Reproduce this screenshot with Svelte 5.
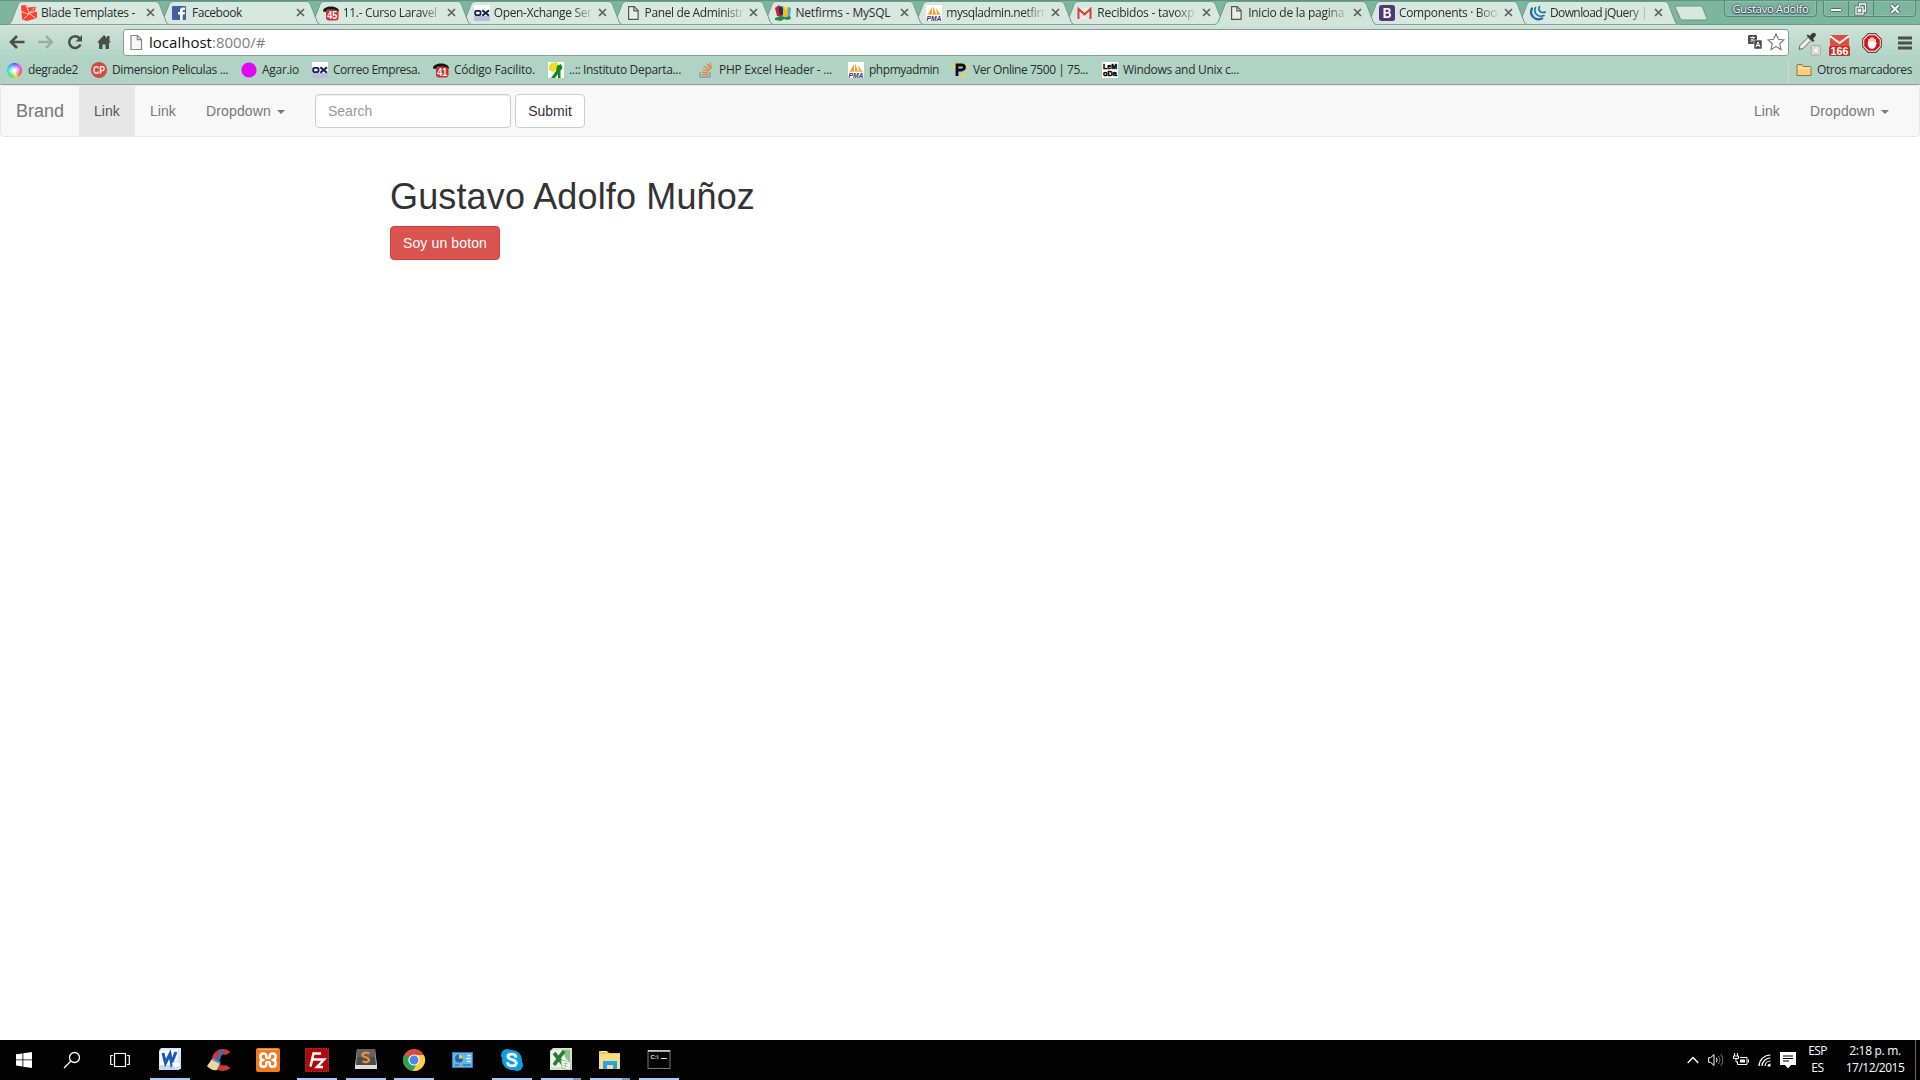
<script>
  const tabs = [
    { icon: 'laravel', title: 'Blade Templates -', w: 94 },
    { icon: 'facebook', title: 'Facebook', w: 50 },
    { icon: 'tel45', title: '11.- Curso Laravel', w: 94, fade: true },
    { icon: 'ox', title: 'Open-Xchange Ser', w: 98, fade: true },
    { icon: 'page', title: 'Panel de Administr', w: 99, fade: true },
    { icon: 'netfirms', title: 'Netfirms - MySQL', w: 95 },
    { icon: 'pma', title: 'mysqladmin.netfirr', w: 99, fade: true },
    { icon: 'gmail', title: 'Recibidos - tavoxp', w: 97, fade: true },
    { icon: 'page', title: 'Inicio de la pagina', w: 96, fade: true, active: true },
    { icon: 'bootstrap', title: 'Components · Boo', w: 98, fade: true },
    { icon: 'jquery', title: 'Download jQuery |', w: 97, fade: true }
  ];

  // box: full slot width of the bookmark; w: width of its label
  const bookmarks = [
    { icon: 'wheel', title: 'degrade2', box: 84, w: 50 },
    { icon: 'cp', title: 'Dimension Peliculas ...', box: 150, w: 116 },
    { icon: 'agar', title: 'Agar.io', box: 71, w: 37 },
    { icon: 'ox', title: 'Correo Empresa.', box: 121, w: 87 },
    { icon: 'tel41', title: 'Código Facilito.', box: 115, w: 81 },
    { icon: 'instituto', title: '..:: Instituto Departa...', box: 150, w: 112 },
    { icon: 'stack', title: 'PHP Excel Header - ...', box: 150, w: 113 },
    { icon: 'pma', title: 'phpmyadmin', box: 104, w: 70 },
    { icon: 'pquestion', title: 'Ver Online 7500 | 75...', box: 150, w: 115 },
    { icon: 'lemoda', title: 'Windows and Unix c...', box: 150, w: 116 }
  ];

  const apps = [
    { icon: 'word', run: 'one' },
    { icon: 'ccleaner' },
    { icon: 'xampp' },
    { icon: 'filezilla', run: 'one' },
    { icon: 'sublime', run: 'one' },
    { icon: 'chrome', run: 'one' },
    { icon: 'panel' },
    { icon: 'skype', run: 'one' },
    { icon: 'excel', run: 'many' },
    { icon: 'explorer', run: 'many' },
    { icon: 'cmd', run: 'one' }
  ];

  // Tracks a label so that it fills the given width.
  function fit(node, width) {
    const natural = node.getBoundingClientRect().width;
    node.style.letterSpacing = (width - natural) / node.textContent.length + 'px';
  }
</script>

{#snippet favicon(name)}
  <svg class="fav" viewBox="0 0 16 16" width="16" height="16">
    {#if name === 'laravel'}
      <path d="M0 .5l5-.5 2 2.500 8-1-1 4 2 1.500V13l-10 3-5-1.500z" fill="#f9432f" />
      <path d="M0 6.500l6.500 2.300L15.500 6M5 .5l3.500 8 6.500 5M2.500 14l6-5.500 5-6" stroke="#f6d5cd" fill="none" />
    {:else if name === 'facebook'}
      <rect x="0" y="1" width="14" height="14" rx="1" fill="#4460a0" />
      <path d="M8 15V9.500H6V7h2V5.500C8 3.500 9 2.600 11 2.600h2v2.300h-1.300c-.8 0-1 .4-1 1V7H13l-.4 2.500h-1.900V15z" fill="#fff" />
    {:else if name === 'tel45' || name === 'tel41'}
      <path d="M0 6.500C-.5-.3 16.500-.3 16 6.500l-3 .3-1.500-2h-7L3 7z" fill="#171515" />
      <rect x="3" y="5" width="12.500" height="10.500" rx="3" fill="#d62b2b" />
      <text x="9.200" y="13.800" font-size="10" font-weight="700" text-anchor="middle" fill="#fff" textLength="10" lengthAdjust="spacingAndGlyphs">{name.slice(3)}</text>
    {:else if name === 'ox'}
      <rect width="16" height="16" fill="#fff" /><rect y="11" width="16" height="5" fill="#b9bedb" />
      <rect x="1.200" y="5.900" width="5.300" height="4.200" rx="1.200" fill="none" stroke="#141e58" stroke-width="1.900" />
      <path d="M8.300 5.200l6.700 5.600M15 5.200l-6.700 5.600" stroke="#141e58" stroke-width="2.100" />
    {:else if name === 'page'}
      <path d="M3.600 1.600h5.500l4 4v8.800H3.600z" fill="#e6efeb" stroke="#555" stroke-width="1.200" />
      <path d="M8.900 1.800v4h4" fill="none" stroke="#555" stroke-width="1.200" />
    {:else if name === 'netfirms'}
      <path d="M0 3l4-3 2 3v9l-4-1z" fill="#cc1e2b" /><path d="M4 2l3-1 2 5-2 6-3-5z" fill="#23306e" />
      <path d="M8 1l5 1v9l-5 1z" fill="#f6ba1c" /><path d="M9 0h3v4l-2 1z" fill="#fbe272" /><path d="M13 2l3 1-1 8-2 1z" fill="#3aaee2" />
      <path d="M0 13l6-2 4 1 5-1 1 3-4 1-3-1-3 2-6-1z" fill="#1f8b4c" />
    {:else if name === 'pma'}
      <rect width="16" height="16" fill="#fff" />
      <path d="M2 9L6 2v7zM7 9V1l3 8zM11 9l-1-6 4 6z" fill="#f6a32c" /><path d="M1 9.500h14" stroke="#f3c27c" />
      <text x="8" y="15.600" font-size="6.500" font-weight="700" font-style="italic" text-anchor="middle" fill="#343467" textLength="15" lengthAdjust="spacingAndGlyphs">PMA</text>
    {:else if name === 'gmail'}
      <path d="M1 3h13v11H1z" fill="#ececec" /><path d="M3 13l4.500-4L12 13" fill="none" stroke="#ccc" />
      <path d="M1.500 14V4L7.500 9.300 13.500 4v10" fill="none" stroke="#d6402f" stroke-width="2" />
    {:else if name === 'bootstrap'}
      <rect width="16" height="16" rx="2.500" fill="#533678" />
      <path d="M4.500 3h4.300c3.400 0 3.600 3.800 1.500 4.600 2.800.8 2.400 5.400-1.500 5.400H4.500zM6.600 4.700v2.200h2c1.500 0 1.500-2.200 0-2.200zM6.600 8.600v2.700h2.200c1.800 0 1.800-2.700 0-2.700z" fill="#fff" fill-rule="evenodd" />
    {:else if name === 'jquery'}
      <path d="M2 3.500C-1 9.500 4.500 16.500 12 13.500" fill="none" stroke="#1a6cab" stroke-width="2.200" stroke-linecap="round" />
      <path d="M5.500 2.500C3 8 8 13 14 10.500M9.500 1.500C7.500 5.500 11 8.800 15.300 7" fill="none" stroke="#1a6cab" stroke-width="1.600" stroke-linecap="round" />
    {:else if name === 'cp'}
      <circle cx="8" cy="8" r="8" fill="#cc4c3f" />
      <text x="8" y="11.800" font-size="10.500" font-weight="700" text-anchor="middle" fill="#f9e6e2" textLength="12" lengthAdjust="spacingAndGlyphs">CP</text>
    {:else if name === 'agar'}
      <circle cx="8" cy="8" r="7.600" fill="#e404f6" />
    {:else if name === 'instituto'}
      <rect width="16" height="16" fill="#fff" /><path d="M1 4l2-3 6-1 2 3-2 4-4 3-4-2z" fill="#e8e020" />
      <path d="M9 4l4-2 1.500 4-2 2.500V16H10v-4l-3 4H3l5-7z" fill="#158517" />
    {:else if name === 'stack'}
      <path d="M2 10v5h10v-5" fill="none" stroke="#91999c" stroke-width="1.300" />
      <path d="M4 12.700h6.500M4 10.200l6.500.8M4.800 7.300l6.200 2M6.300 4.300l5.400 3.800M9.300 1.800l3.600 5M12 .5l1.300 6" stroke="#ed7a2a" stroke-width="1.200" />
    {:else if name === 'pquestion'}
      <path d="M0 1h4v5H1zM12 2l4-1v4h-3zM9 12l4-1 1 4H9z" fill="#f3cf54" />
      <path d="M5 14V3h4.500c4 0 4 4.500 0 5H6" fill="none" stroke="#111" stroke-width="2.800" />
    {:else if name === 'lemoda'}
      <rect width="16" height="16" fill="#fff" />
      <text x="8" y="7.300" font-size="8" font-weight="700" text-anchor="middle" stroke="#000" stroke-width=".5" textLength="14" lengthAdjust="spacingAndGlyphs">LeM</text>
      <text x="8" y="14.300" font-size="8" font-weight="700" text-anchor="middle" stroke="#000" stroke-width=".5" textLength="14" lengthAdjust="spacingAndGlyphs">oDa</text>
    {:else if name === 'folder'}
      <path d="M1 3.500q0-1 1-1h4l1.500 2H14q1 0 1 1v8H1z" fill="#f9cd83" stroke="#a3713a" /><path d="M1.600 6h12.800" stroke="#fdecc8" />
    {/if}
  </svg>
{/snippet}

{#snippet appicon(name)}
  <svg viewBox="0 0 24 24" width="24" height="24">
    {#if name === 'word'}
      <path d="M3 0h20v21H1V3z" fill="#d9e8f8" /><path d="M2 3l18-2v17H2z" fill="#f8fbff" /><path d="M1 20l1-3h15l5 5H1z" fill="#c4dbf3" />
      <path d="M5 5l2.500 10L12 6l1.500 9L18 4" fill="none" stroke="#1c57b0" stroke-width="3" /><path d="M14 15l7-2 2 5-6 3z" fill="#fff" stroke="#a9c3df" stroke-width=".6" />
    {:else if name === 'ccleaner'}
      <path d="M23.500 4A11 11 0 1 0 23.500 20l-4.500-3a5.500 5.500 0 1 1 0-10z" fill="#cb3b34" />
      <path d="M14 1l2.500 1-4 11-3-1z" fill="#2579c2" /><path d="M5 11l8 4-3 7c-4 1-7-1-10-4z" fill="#eed5a0" /><path d="M6 10l8 4-1 2-8-4z" fill="#4a91ca" />
    {:else if name === 'xampp'}
      <rect width="24" height="24" rx="2" fill="#f17a21" /><path d="M3 1.500h18" stroke="#fbb481" />
      <g fill="none" stroke="#fff" stroke-width="2.500" stroke-linejoin="round">
        <path d="M10.300 10.500V8C10.300 4.500 4.300 4.500 4.300 8.500c0 2.200 1.200 3.600 3.200 3.600-2 0-3.200 1.400-3.200 3.600 0 4 6 4 6 .5v-2.500" />
        <path d="M13.700 10.500V8c0-3.500 6-3.500 6 .5 0 2.200-1.200 3.600-3.200 3.600 2 0 3.200 1.400 3.200 3.600 0 4-6 4-6 .5v-2.500" />
        <path d="M10.300 10.300h3.400M10.300 14h3.400" stroke-width="2" />
      </g>
    {:else if name === 'filezilla'}
      <rect x=".5" y=".5" width="23" height="23" fill="#ae0b0b" stroke="#d03030" stroke-dasharray="1.500 1" />
      <path d="M5.500 18.500L8.500 5.500H16M6.500 11.500h6.500M12.500 11.500h6.500l-7 7.500h6" fill="none" stroke="#fff" stroke-width="2.500" />
    {:else if name === 'sublime'}
      <path d="M3 1h18l2 17v3H1v-3z" fill="#ddd" /><path d="M3 1h18l1 16H2z" fill="#4c4c4c" /><path d="M3 1h18v8H3z" fill="#626262" />
      <path d="M15.500 5.500C9 3 6.500 7.300 10 8.700l3.500 1.400c3.500 1.600 1 5.500-5 3.200" fill="none" stroke="#ef9036" stroke-width="2.200" />
    {:else if name === 'chrome'}
      <circle cx="12" cy="12" r="11" fill="#dd4b3e" />
      <path d="M2.500 6.500A11 11 0 0 0 10.800 22.900L16.800 14 12 12z" fill="#2ba24c" />
      <path d="M12 7h9.800A11 11 0 0 1 10.800 23l5-9z" fill="#fbd03f" />
      <circle cx="12" cy="12" r="5.600" fill="#fff" /><circle cx="12" cy="12" r="4.500" fill="#4d86ee" />
    {:else if name === 'panel'}
      <rect x="1.500" y="4.500" width="20" height="15" fill="#61b6ee" stroke="#2c7dc0" /><circle cx="8" cy="10.500" r="4" fill="#1d69ac" />
      <path d="M8 10.500V6.500a4 4 0 0 1 4 4z" fill="#f7c944" /><path d="M16 7.500h4M15 10.500h5M16 13.500h4" stroke="#d9eefb" stroke-width="1.300" /><path d="M4 17h16" stroke="#2476b9" stroke-width="1.300" /><path d="M8 17h4" stroke="#f4a130" stroke-width="1.500" />
    {:else if name === 'skype'}
      <circle cx="12" cy="12" r="10" fill="#0b9fe3" /><circle cx="7" cy="7" r="6" fill="#0b9fe3" /><circle cx="17" cy="17" r="6" fill="#0b9fe3" />
      <path d="M15.800 8.500c-1-3.300-7.800-3.300-7.800.3 0 3.600 8.300 2 8.300 6.200 0 3.800-7.600 3.800-8.600.3" fill="none" stroke="#fff" stroke-width="2.800" stroke-linecap="round" />
    {:else if name === 'excel'}
      <path d="M4 0h19v22H1V3z" fill="#cfe6cb" /><path d="M4 2h17v17H2V4z" fill="#edf7ea" /><path d="M13 2h8v12l-4-3z" fill="#8ac18a" />
      <path d="M5 5l9 11M15 3L5 17" stroke="#2c7b34" stroke-width="3.700" /><path d="M12 12l10 2-1 8-8-2z" fill="#fff" stroke="#86ad80" stroke-width=".7" /><path d="M14 15l6 1M13.600 17.500l6 1M17 14l-1 6" stroke="#8aae87" stroke-width=".7" />
    {:else if name === 'explorer'}
      <path d="M1 3h8l2 2h11v16H1z" fill="#f3c653" /><path d="M1 6h21v15H1z" fill="#fbdc82" /><path d="M3 3.500h5" stroke="#fff" />
      <path d="M5 21v-8h14v8h-4v-4H9v4z" fill="#1aa8ea" />
    {:else if name === 'cmd'}
      <rect x="1" y="2.500" width="22" height="18" fill="#050505" stroke="#777" /><path d="M1 3h22" stroke="#d3d3d3" stroke-width="1.600" />
      <text x="3.500" y="11" font-size="6" font-weight="700" fill="#ddd">C:\</text><path d="M14 10.500h6" stroke="#ddd" />
    {/if}
  </svg>
{/snippet}

<div class="screen">
  <header class="tabstrip">
    <div class="tabs">
      {#each tabs as tab, i}
        <div class="tab" class:active={tab.active} style:z-index={tab.active ? 30 : 20 - i}>
          <svg class="shape" viewBox="0 0 164 25" width="164" height="25">
            <path class="fill" d="M0 23.500C3 22.500 3 21 4 19L10 3.500C11 1.500 12 .5 15 .5H146.500C149.500 .5 150.500 1.500 151.500 3.500L157.500 19C158.500 22 159 23 161.500 23.500V25H0z" />
            <path class="edge" d="M0 23.500C3 22.500 3 21 4 19L10 3.500C11 1.500 12 .5 15 .5H146.500C149.500 .5 150.500 1.500 151.500 3.500L157.500 19C158.500 22 159 23 161.500 23.500" />
            {#if !tab.active}<path class="base" d="M0 23.500H164" />{/if}
          </svg>
          {@render favicon(tab.icon)}
          <span class="title" class:fade={tab.fade}><span use:fit={tab.w}>{tab.title}</span></span>
          <svg class="x" viewBox="0 0 9 9" width="9" height="9"><path d="M1 1l7 7M8 1L1 8" stroke="#5b615e" stroke-width="1.700" /></svg>
        </div>
      {/each}
      <svg class="newtab" viewBox="0 0 34 16" width="34" height="16">
        <path d="M3.500 1h22c2 0 2.700.6 3.500 2.500l3.500 9c.6 1.500 0 2.500-1.500 2.500H9.500C7.500 15 6.500 14.300 6 13L1.800 3.500C1.200 2 1.800 1 3.500 1z" fill="#d6e8e0" stroke="#669682" />
      </svg>
    </div>
    <div class="caption">
      <div class="user"><span use:fit={76}>Gustavo Adolfo</span></div>
      <div class="controls">
        <span><svg viewBox="0 0 14 14" width="14" height="14"><rect x="1.500" y="6.500" width="11" height="3" rx="1" fill="#fff" stroke="#4c6c60" /></svg></span>
        <span><svg viewBox="0 0 14 14" width="14" height="14"><g fill="none" stroke="#4c6c60" stroke-width="3"><path d="M5.500 4V2h6v7H9" /><rect x="2" y="5" width="7" height="7" /></g><g fill="none" stroke="#fff" stroke-width="1.300"><path d="M5.500 4V2h6v7H9" /><rect x="2" y="5" width="7" height="7" /><rect x="4.500" y="7.500" width="2" height="2" /></g></svg></span>
        <span class="wide"><svg viewBox="0 0 14 14" width="14" height="14"><path d="M3 3l8 8M11 3l-8 8" stroke="#4c6c60" stroke-width="4" /><path d="M3.300 3.300l7.400 7.400M10.700 3.300l-7.400 7.400" stroke="#fff" stroke-width="2" /></svg></span>
      </div>
    </div>
  </header>

  <div class="chrome">
    <div class="toolbar">
      <div class="nav">
        <svg viewBox="0 0 16 16" width="16" height="16"><path d="M15.500 8H3M8 2L2 8l6 6" fill="none" stroke="#4a4f4d" stroke-width="2.600" /></svg>
        <svg viewBox="0 0 16 16" width="16" height="16"><path d="M.5 8H13M8 2l6 6-6 6" fill="none" stroke="#94aea4" stroke-width="2.400" /></svg>
        <svg viewBox="0 0 16 16" width="16" height="16"><path d="M12.500 4.200A5.900 5.900 0 1 0 13.500 10.500" fill="none" stroke="#4a4f4d" stroke-width="2.500" /><path d="M15 1v6.500H8.500z" fill="#4a4f4d" /></svg>
        <svg viewBox="0 0 16 16" width="16" height="16"><path d="M8 1L1 8.500h2V15h3.500v-4.500h3V15H13V8.500h2l-1.500-1.700V2H11v2z" fill="#4a4f4d" /></svg>
      </div>
      <div class="omnibox">
        <svg viewBox="0 0 13 17" width="13" height="17"><path d="M1 1.500h6.500l4 4v10H1z" fill="#f7f7f7" stroke="#858585" stroke-width="1.200" /><path d="M7.300 1.500v4.200h4.200" fill="none" stroke="#858585" stroke-width="1.200" /></svg>
        <span class="url"><span use:fit={116.500}>localhost<i>:8000/#</i></span></span>
        <svg class="translate" viewBox="0 0 14 14" width="14" height="14"><rect width="9" height="9" rx="1" fill="#4c4c4c" /><path d="M2 2.500h5M4.500 1.500v1M2.500 7l3.500-4M3 4l3.500 3" stroke="#fff" stroke-width=".9" fill="none" /><rect x="6" y="5" width="8" height="9" rx="1" fill="#4c4c4c" stroke="#fff" stroke-width=".5" /><path d="M8 12l2-5 2 5M8.700 10.500h2.600" stroke="#fff" fill="none" /></svg>
        <svg viewBox="0 0 18 18" width="18" height="18"><path d="M9 1l2.300 5.300 5.700.6-4.200 3.900 1.200 5.700-5-2.900-5 2.900 1.200-5.700L1 6.900l5.700-.6z" fill="#fff" stroke="#777" stroke-width="1.200" /></svg>
      </div>
      <div class="ext">
        <svg viewBox="0 0 24 24" width="24" height="24"><path d="M1 17.500l1-4 8-8 3 3-8 8z" fill="#eee" stroke="#666" /><path d="M8.500 3.500l6.500 6.500 1.500-1.500-1.500-1.500 2.500-3c1.500-2.500-1.500-4.500-3.500-2.500L11.500 4 10 2.500z" fill="#343c39" /><rect x="13" y="13.500" width="9.500" height="9.500" rx="1.500" fill="#dcdcdc" stroke="#a5aaa8" /><rect x="16.300" y="16.800" width="3" height="3" fill="#fff" /></svg>
        <svg viewBox="0 0 22 23" width="22" height="23"><path d="M1 1h19v12H1z" fill="#e44c40" /><path d="M1 2l9.500 7L20 2" fill="none" stroke="#fff" stroke-width="2" /><rect x="0" y="12" width="21" height="10" rx="1.500" fill="#c92f2b" /><text x="10.500" y="20.500" font-size="10" font-weight="700" text-anchor="middle" fill="#fff" textLength="18" lengthAdjust="spacingAndGlyphs">166</text></svg>
        <svg viewBox="0 0 20 20" width="20" height="20"><path d="M6.200.7h7.600l5.500 5.500v7.600l-5.500 5.500H6.200L.7 13.800V6.200z" fill="#fff" stroke="#544" stroke-width="1.200" /><path d="M6.800 2.200h6.400l4.600 4.600v6.400l-4.600 4.600H6.800l-4.600-4.600V6.800z" fill="#df1010" /><path d="M7 11V6.500M9 10V5M11 10V5M13 11V6.500" stroke="#fff" stroke-width="1.500" stroke-linecap="round" /><path d="M6.300 9h7.400v3q-1 3-2.200 3.300h-3Q6.300 14 6.300 12zM13 12l2-2" fill="#fff" stroke="#fff" stroke-width=".8" /></svg>
        <svg viewBox="0 0 14 14" width="14" height="14"><path d="M0 2h14M0 7h14M0 12h14" stroke="#494f4c" stroke-width="3" /></svg>
      </div>
    </div>
    <div class="bookmarks">
      {#each bookmarks as b}
        <div class="bm" style:width="{b.box}px">
          {#if b.icon === 'wheel'}<i class="wheel"></i>{:else}{@render favicon(b.icon)}{/if}
          <span use:fit={b.w}>{b.title}</span>
        </div>
      {/each}
      <div class="bm other">{@render favicon('folder')}<span use:fit={95}>Otros marcadores</span></div>
    </div>
  </div>

  <main class="page">
    <nav class="navbar">
      <a class="brand">Brand</a>
      <a class="link on">Link</a>
      <a class="link">Link</a>
      <a class="link menu"><span use:fit={65}>Dropdown</span><b class="caret"></b></a>
      <form>
        <input type="text" placeholder="Search" />
        <button type="button" class="btn submit">Submit</button>
      </form>
      <div class="right">
        <a class="link">Link</a>
        <a class="link menu"><span use:fit={65}>Dropdown</span><b class="caret"></b></a>
      </div>
    </nav>
    <div class="container">
      <h1><span use:fit={365}>Gustavo Adolfo Muñoz</span></h1>
      <button type="button" class="btn danger"><span use:fit={84}>Soy un boton</span></button>
    </div>
  </main>

  <footer class="taskbar">
    <div class="sys"><svg viewBox="0 0 16 16" width="16" height="16"><path d="M0 2.300l6.500-.9v6.100H0zM7.300 1.300L16 0v7.500H7.300zM0 8.300h6.500v6.200L0 13.600zM7.300 8.300H16V16l-8.700-1.300z" fill="#fff" /></svg></div>
    <div class="sys"><svg viewBox="0 0 18 18" width="18" height="18"><circle cx="11.500" cy="6.500" r="5" fill="none" stroke="#fff" stroke-width="1.300" /><path d="M8 10l-7 7" stroke="#fff" stroke-width="1.300" /></svg></div>
    <div class="sys"><svg viewBox="0 0 20 16" width="20" height="16"><path d="M4.500 1.500h11v13h-11zM3 3.500H.7v9H3M17 3.500h2.300v9H17" fill="none" stroke="#fff" stroke-width="1.200" /></svg></div>
    <div class="apps">
      {#each apps as app}
        <div class="app {app.run ?? ''}">{@render appicon(app.icon)}</div>
      {/each}
    </div>
    <div class="tray">
      <svg viewBox="0 0 12 8" width="12" height="8"><path d="M.7 7L6 1.500 11.300 7" fill="none" stroke="#fff" stroke-width="1.400" /></svg>
      <svg viewBox="0 0 16 14" width="16" height="14"><path d="M.6 4.700h2L6 1.500v11L2.600 9.300h-2z" fill="none" stroke="#fff" /><path d="M8.300 4.800q1.600 2.200 0 4.400" fill="none" stroke="#fff" /><path d="M10.500 3q3 4 0 8M12.700 1.200q4.300 5.800 0 11.600" fill="none" stroke="#777" /></svg>
      <svg viewBox="0 0 16 14" width="16" height="14"><path d="M1.500 0v3M4.500 0v3M.5 3h5v2.500h-5zM3 5.500V9h2" fill="none" stroke="#fff" /><path d="M7 4.500h7v7H4.500V9M15.500 6.500v3" fill="none" stroke="#fff" /><path d="M7 6.500h5v3H7z" fill="#fff" /></svg>
      <svg viewBox="0 0 13 13" width="13" height="13"><path d="M1 12A11.500 11.500 0 0 1 12.500 1M4 12a8.500 8.500 0 0 1 8.500-8M7 12a5.500 5.500 0 0 1 5.500-5" fill="none" stroke="#fff" stroke-width="1.200" /><path d="M9.500 12.500v-1a3 3 0 0 1 3-2v3z" fill="#fff" /></svg>
      <svg viewBox="0 0 16 17" width="16" height="17"><path d="M0 0h16v13h-5l-3 3.500L5 13H0z" fill="#fff" /><path d="M3 4h10M3 6.500h10M3 9h6" stroke="#000" /></svg>
    </div>
    <div class="lang"><span use:fit={18.500}>ESP</span><span use:fit={12.500}>ES</span></div>
    <div class="clock"><span use:fit={51.500}>2:18 p. m.</span><span use:fit={58.500}>17/12/2015</span></div>
    <div class="peek"></div>
  </footer>
</div>

<style>
  :global(body) { margin: 0; overflow: hidden; }
  * { box-sizing: border-box; }
  svg { display: block; flex: none; }
  svg text { font-family: 'Liberation Sans', sans-serif; }
  .screen { width: 1920px; height: 1080px; display: flex; flex-direction: column; background: #fff; font-family: 'Open Sans', 'Noto Sans', sans-serif; font-size: 12px; color: #2a2d2c; white-space: nowrap; }
  .tabstrip { height: 25px; flex: none; display: flex; justify-content: space-between; background: #7eb5a0; border-bottom: 1px solid #6a9d89; border-top: 1px solid #609480; }
  .tabs { display: flex; padding-left: 8px; }
  .tab { position: relative; width: 150.9px; height: 24px; flex: none; display: flex; align-items: center; padding: 0 0 1px 13px; }
  .shape { position: absolute; left: 0; top: 0; z-index: -1; }
  .shape .fill { fill: #d7e8e1; }
  .shape .edge { fill: none; stroke: #6f9b8a; stroke-width: 1; }
  .shape .base { stroke: #879e95; fill: none; }
  .active .shape .fill { fill: #d1e4dc; }
  .title { width: 102px; margin-left: 4px; overflow: hidden; flex: none; line-height: 17px; }
  .title > span, .user > span, .lang > span, .clock > span, .url > span, h1 > span, .menu > span, .danger > span { display: inline-block; }
  .title.fade { mask-image: linear-gradient(90deg, #000 78px, transparent 101px); }
  .x { margin-left: 2.500px; }
  .newtab { margin: 4px 0 0 6px; }
  .caption { display: flex; height: 16px; gap: 6px; padding-right: 4px; }
  .user { width: 93px; border: 1px solid #58877a; border-top: 0; border-radius: 0 0 4px 4px; color: #fff; text-align: center; line-height: 15px; font-size: 11px; text-shadow: 0 0 2px #234, 0 0 2px #345, 0 1px 1px #345; box-shadow: inset 0 0 0 1px #8fc0ad; }
  .controls { width: 93px; display: flex; border: 1px solid #58877a; border-top: 0; border-radius: 0 0 4px 4px; box-shadow: inset 0 0 0 1px #8fc0ad; }
  .controls span { width: 25px; display: flex; justify-content: center; align-items: center; border-right: 1px solid #58877a; }
  .controls .wide { flex: 1; border-right: 0; }
  .chrome { height: 60px; flex: none; background: linear-gradient(#cfe2da, #b0d3c5 34px); border-bottom: 1px solid #999; }
  .toolbar { height: 34px; display: flex; align-items: flex-start; padding-top: 4px; }
  .nav { width: 123px; padding: 5px 0 0 9px; display: flex; gap: 13px; }
  .omnibox { width: 1666px; height: 27px; border: 1px solid #849e93; border-radius: 3px; background: #fff; display: flex; align-items: center; padding: 0 3px 1px 6px; }
  .url { flex: 1; margin-left: 6px; font-size: 15px; line-height: 23px; color: #111; }
  .url i { font-style: normal; color: #808080; }
  .translate { margin-right: 5px; }
  .ext { display: flex; padding-left: 9px; }
  .ext svg:nth-child(1) { margin-top: 3px; }
  .ext svg:nth-child(2) { margin: 5px 0 0 7px; }
  .ext svg:nth-child(3) { margin: 4px 0 0 11px; }
  .ext svg:nth-child(4) { margin: 7px 0 0 16px; }
  .bookmarks { height: 24px; display: flex; padding: 0 8px 0 7px; }
  .bm { display: flex; gap: 5px; align-items: center; padding-bottom: 2px; height: 24px; flex: none; }
  .bm > span { margin-top: -1px; }
  .wheel { flex: none; width: 15px; height: 15px; margin-right: 1px; border-radius: 50%; background: radial-gradient(circle, #fff 8%, #fff0 68%), conic-gradient(#54f, #c4f 12%, #f3a 25%, #f43 36%, #fc3 45%, #4d4 58%, #2dd 75%, #2af 88%, #54f); }
  .other { margin-left: auto; border-left: 1px solid #d8d5cf; padding-left: 7px; }
  .page { flex: 1; font: 14px/20px 'Liberation Sans', Arial, sans-serif; color: #333; }
  .navbar { height: 52px; display: flex; background: #f8f8f8; border: 1px solid #e7e7e7; border-radius: 4px; color: #777; }
  .brand { padding: 15px; font-size: 18px; width: 78px; }
  .link { padding: 15px; width: 56px; }
  .menu { width: 109px; display: flex; align-items: center; gap: 6px; }
  .on { background: #e7e7e7; color: #555; }
  .caret { border-top: 4px solid; border-left: 4px solid transparent; border-right: 4px solid transparent; margin-top: 1px; }
  form { display: flex; gap: 4px; padding: 8px 15px; }
  input { width: 196px; height: 34px; padding: 6px 12px; border: 1px solid #ccc; border-radius: 4px; font: inherit; box-shadow: inset 0 1px 1px #00000013; }
  input::placeholder { color: #999; opacity: 1; }
  .btn { height: 34px; padding: 6px 12px; border: 1px solid #ccc; border-radius: 4px; background: #fff; color: #333; font: inherit; }
  .submit { width: 70px; }
  .right { margin-left: auto; display: flex; padding-right: 15px; }
  .container { width: 1170px; margin: 0 auto; padding: 40px 15px 0; }
  h1 { margin: 0 0 10px; font-weight: 500; font-size: 36px; line-height: 39px; }
  .danger { display: block; width: 110px; color: #fff; background: #d9534f; border-color: #d43f3a; }
  .taskbar { height: 40px; flex: none; background: #020202; display: flex; color: #fff; }
  .sys { width: 48px; display: flex; align-items: center; justify-content: center; }
  .apps { display: flex; padding-left: 6px; gap: 8.900px; }
  .app { width: 40px; height: 40px; padding: 8px; border-bottom: 2px solid transparent; }
  .one { border-color: #abcaf6; }
  .many { border-style: solid; border-width: 0 0 2px; border-image: linear-gradient(90deg, #abcaf6 31px, #7d97b9 31px) 2; }
  .tray { margin-left: auto; display: flex; align-items: center; gap: 9px; }
  .lang, .clock { display: flex; flex-direction: column; align-items: center; line-height: 17px; padding-top: 2px; }
  .lang { width: 43px; }
  .clock { width: 72px; margin-right: 4px; }
  .peek { width: 5px; border-left: 1px solid #666; }
</style>
